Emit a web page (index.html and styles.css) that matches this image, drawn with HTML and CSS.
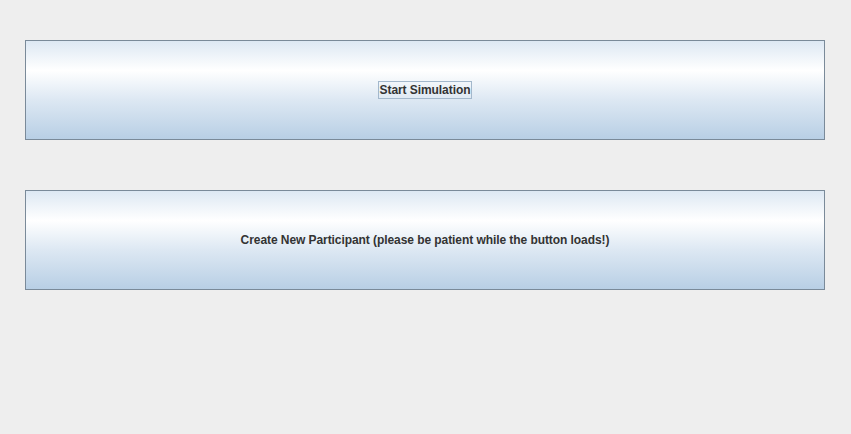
FILE: index.html
```html
<!DOCTYPE html>
<html>
<head>
<meta charset="utf-8">
<link rel="stylesheet" href="styles.css">
</head>
<body>
<div class="panel">
  <button class="mbtn"><span class="label focused">Start Simulation</span></button>
  <button class="mbtn"><span class="label">Create New Participant (please be patient while the button loads!)</span></button>
</div>
</body>
</html>
```
FILE: styles.css
```css
html, body {
  margin: 0;
  padding: 0;
  background: #eeeeee;
  width: 851px;
  height: 434px;
  overflow: hidden;
}
.panel {
  display: flex;
  flex-direction: column;
  gap: 50px;
  padding: 40px 26px 0 25px;
}
.mbtn {
  box-sizing: border-box;
  width: 800px;
  height: 100px;
  margin: 0;
  padding: 0;
  border: 1px solid #7a8a99;
  background: linear-gradient(to bottom, #dde8f3 0%, #ffffff 30%, #dde8f3 60%, #b8cfe5 100%);
  display: flex;
  align-items: center;
  justify-content: center;
  font-family: "Liberation Sans", Arial, sans-serif;
  font-weight: bold;
  font-size: 12px;
  letter-spacing: -0.07px;
  color: #333333;
  cursor: default;
}
.label {
  display: block;
  line-height: 15px;
  padding: 1px 1px 0 1px;
  border: 1px solid transparent;
}
.label.focused {
  border-color: #a3b8cc;
}
```
